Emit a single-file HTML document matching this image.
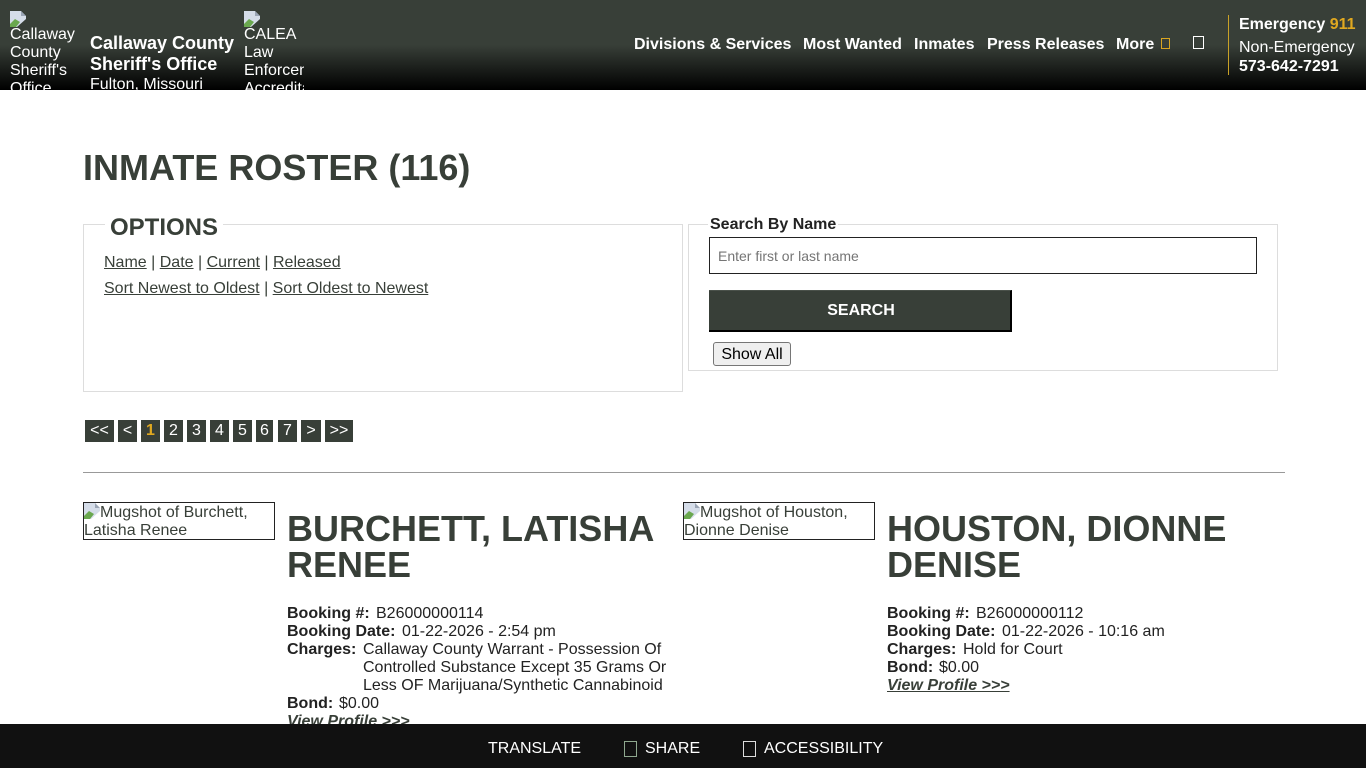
<!DOCTYPE html>
<html lang="en"><head><meta charset="utf-8"><title>Inmate Roster</title>
<style>
html,body{margin:0;padding:0;background:#fff}
body{width:1366px;height:768px;overflow:hidden;position:relative;font-family:"Liberation Sans",sans-serif;font-size:16px;color:#222}
.a{position:absolute;white-space:nowrap}
a{color:inherit}
#hd{position:absolute;left:0;top:0;width:1366px;height:90px;background:linear-gradient(#383f38 0,#383f38 50%,#000 100%);color:#fff;overflow:hidden}
.alt{position:absolute;top:11px;overflow:hidden;height:79px;line-height:18px;font-size:16px;color:#fff}
.alt svg{display:block;margin-bottom:-1px}
.nav{font-weight:bold;font-size:16px;line-height:18px;top:36px}
.box{position:absolute;border:1px solid #ddd;box-sizing:border-box}
.pg{position:absolute;top:420px;height:22px;line-height:22px;background:#383f38;color:#fff;text-align:center;font-size:16px}
.mug{position:absolute;top:502px;width:192px;height:38px;box-sizing:border-box;border:1px solid #222;line-height:18px;font-size:16px;color:#383f38;padding:0;overflow:hidden}
.mug svg{display:inline-block;vertical-align:-2px}
h2{position:absolute;margin:0;top:511px;font-size:36px;line-height:36px;color:#383f38;font-weight:bold}
.row{position:absolute;line-height:18px;font-size:16px;white-space:nowrap;color:#222}
.row b{color:#222}
.prof{font-weight:bold;font-style:italic;color:#383f38;text-decoration:underline}
#ft{position:absolute;left:0;top:724px;width:1366px;height:44px;background:#111;color:#fff;font-size:16px}
.tf{position:absolute;display:block;box-sizing:border-box}
</style></head>
<body>
<div id="hd">
<div class="alt" style="left:10px;width:70px"><svg width="16" height="16" viewBox="0 0 16 16"><path d="M0 0h11l5 5v3l-9 8H0z" fill="#d5dde9"/><path d="M11 0l5 5h-5z" fill="#9aa5b5"/><path d="M0 16v-3l5-5 5 3-4 5z" fill="#6aa84f"/></svg>Callaway<br>County<br>Sheriff's<br>Office</div>
<div class="a" style="left:90px;top:33px;font-weight:bold;font-size:18px;line-height:21px">Callaway County<br>Sheriff's Office</div>
<div class="a" style="left:90px;top:76px;font-size:16px;line-height:18px;height:14px;overflow:hidden">Fulton, Missouri</div>
<div class="alt" style="left:244px;width:60px"><svg width="16" height="16" viewBox="0 0 16 16"><path d="M0 0h11l5 5v3l-9 8H0z" fill="#d5dde9"/><path d="M11 0l5 5h-5z" fill="#9aa5b5"/><path d="M0 16v-3l5-5 5 3-4 5z" fill="#6aa84f"/></svg>CALEA<br>Law<br>Enforcement<br>Accreditation</div>
<div class="a nav" style="left:634px">Divisions &amp; Services</div>
<div class="a nav" style="left:803px">Most Wanted</div>
<div class="a nav" style="left:914px">Inmates</div>
<div class="a nav" style="left:987px">Press Releases</div>
<div class="a nav" style="left:1116px">More</div>
<span class="tf" style="left:1161px;top:38px;width:9px;height:11px;border:1px solid #d9a520"></span>
<span class="tf" style="left:1193px;top:36px;width:11px;height:13px;border:1px solid #fff"></span>
<div class="a" style="left:1228px;top:15px;width:1px;height:60px;background:#c9a227"></div>
<div class="a" style="left:1239px;top:16px;font-weight:bold;font-size:16px;line-height:18px">Emergency <span style="color:#e0a820">911</span></div>
<div class="a" style="left:1239px;top:39px;font-size:16px;line-height:18px">Non-Emergency</div>
<div class="a" style="left:1239px;top:58px;font-weight:bold;font-size:16px;line-height:18px">573-642-7291</div>
</div>

<div class="a" style="left:83px;top:147px;font-size:36px;line-height:41px;font-weight:bold;color:#383f38">INMATE ROSTER (116)</div>

<div class="box" style="left:83px;top:224px;width:600px;height:168px"></div>
<div class="a" style="left:105px;top:214px;padding:0 5px;background:#fff;font-size:24px;line-height:28px;font-weight:bold;color:#383f38">OPTIONS</div>
<div class="a" style="left:104px;top:254px;line-height:18px;color:#383f38"><a href="#">Name</a> | <a href="#">Date</a> | <a href="#">Current</a> | <a href="#">Released</a></div>
<div class="a" style="left:104px;top:280px;line-height:18px;color:#383f38"><a href="#">Sort Newest to Oldest</a> | <a href="#">Sort Oldest to Newest</a></div>

<div class="box" style="left:688px;top:224px;width:590px;height:147px"></div>
<div class="a" style="left:708px;top:216px;padding:0 2px;background:#fff;font-weight:bold;line-height:18px;color:#222">Search By Name</div>
<div class="a" style="left:709px;top:237px;width:548px;height:37px;box-sizing:border-box;border:1px solid #222;background:#fff;padding-left:8px;line-height:36px;font-size:14px;color:#757575">Enter first or last name</div>
<div class="a" style="left:709px;top:290px;width:303px;height:42px;box-sizing:border-box;background:#383f38;border-right:2px solid #000;border-bottom:2px solid #000;border-top:1px solid #4a514a;color:#fff;font-weight:bold;text-align:center;line-height:40px;font-size:16px;padding-left:3px">SEARCH</div>
<div class="a" style="left:713px;top:342px;width:78px;height:24px;box-sizing:border-box;border:1px solid #767676;border-radius:3px;background:#efefef;color:#000;text-align:center;line-height:23px;font-size:16px">Show All</div>

<div class="pg" style="left:85px;width:29px">&lt;&lt;</div>
<div class="pg" style="left:118px;width:19px">&lt;</div>
<div class="pg" style="left:141px;width:19px;color:#e0a820;font-weight:bold">1</div>
<div class="pg" style="left:164px;width:19px">2</div>
<div class="pg" style="left:187px;width:19px">3</div>
<div class="pg" style="left:210px;width:19px">4</div>
<div class="pg" style="left:233px;width:19px">5</div>
<div class="pg" style="left:256px;width:17px">6</div>
<div class="pg" style="left:278px;width:19px">7</div>
<div class="pg" style="left:301px;width:20px">&gt;</div>
<div class="pg" style="left:325px;width:28px">&gt;&gt;</div>

<div class="a" style="left:83px;top:472px;width:1202px;height:1px;background:#999"></div>

<div class="mug" style="left:83px"><svg width="16" height="16" viewBox="0 0 16 16"><path d="M0 0h11l5 5v3l-9 8H0z" fill="#d5dde9"/><path d="M11 0l5 5h-5z" fill="#9aa5b5"/><path d="M0 16v-3l5-5 5 3-4 5z" fill="#6aa84f"/></svg>Mugshot of Burchett, Latisha Renee</div>
<h2 style="left:287px">BURCHETT, LATISHA<br>RENEE</h2>
<div class="row" style="left:287px;top:605px"><b>Booking #:</b></div><div class="row" style="left:376px;top:605px">B26000000114</div>
<div class="row" style="left:287px;top:623px"><b>Booking Date:</b></div><div class="row" style="left:402px;top:623px">01-22-2026 - 2:54 pm</div>
<div class="row" style="left:287px;top:641px"><b>Charges:</b></div><div class="row" style="left:363px;top:641px">Callaway County Warrant - Possession Of<br>Controlled Substance Except 35 Grams Or<br>Less OF Marijuana/Synthetic Cannabinoid</div>
<div class="row" style="left:287px;top:695px"><b>Bond:</b></div><div class="row" style="left:339px;top:695px">$0.00</div>
<div class="row prof" style="left:287px;top:713px">View Profile &gt;&gt;&gt;</div>

<div class="mug" style="left:683px"><svg width="16" height="16" viewBox="0 0 16 16"><path d="M0 0h11l5 5v3l-9 8H0z" fill="#d5dde9"/><path d="M11 0l5 5h-5z" fill="#9aa5b5"/><path d="M0 16v-3l5-5 5 3-4 5z" fill="#6aa84f"/></svg>Mugshot of Houston, Dionne Denise</div>
<h2 style="left:887px">HOUSTON, DIONNE<br>DENISE</h2>
<div class="row" style="left:887px;top:605px"><b>Booking #:</b></div><div class="row" style="left:976px;top:605px">B26000000112</div>
<div class="row" style="left:887px;top:623px"><b>Booking Date:</b></div><div class="row" style="left:1002px;top:623px">01-22-2026 - 10:16 am</div>
<div class="row" style="left:887px;top:641px"><b>Charges:</b></div><div class="row" style="left:963px;top:641px">Hold for Court</div>
<div class="row" style="left:887px;top:659px"><b>Bond:</b></div><div class="row" style="left:939px;top:659px">$0.00</div>
<div class="row prof" style="left:887px;top:677px">View Profile &gt;&gt;&gt;</div>

<div id="ft">
<div class="a" style="left:488px;top:16px;line-height:18px">TRANSLATE</div>
<span class="tf" style="left:624px;top:17px;width:13px;height:16px;border:1px solid #8fa88f"></span>
<div class="a" style="left:645px;top:16px;line-height:18px">SHARE</div>
<span class="tf" style="left:743px;top:17px;width:13px;height:16px;border:1px solid #ddd"></span>
<div class="a" style="left:764px;top:16px;line-height:18px">ACCESSIBILITY</div>
</div>
</body></html>
